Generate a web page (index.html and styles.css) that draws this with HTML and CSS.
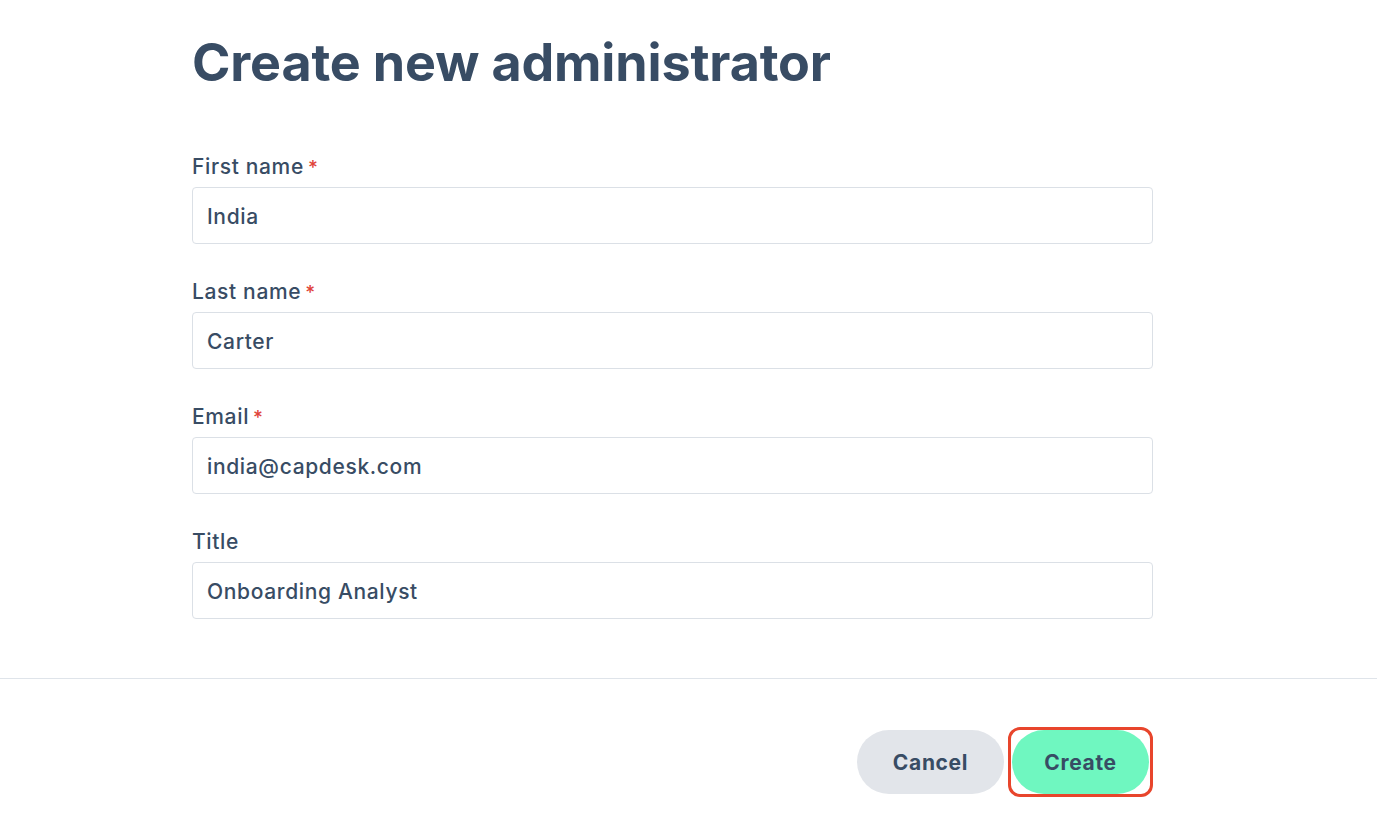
FILE: index.html
```html
<!DOCTYPE html>
<html lang="en">
<head>
    <meta charset="UTF-8">
    <title>Create new administrator</title>
    <link rel="stylesheet" href="styles.css">
</head>
<body>
<div class="container">
    <h1>Create new administrator</h1>

    <form class="admin-form">
        <div class="field">
            <label for="firstName">First name<span class="required">*</span></label>
            <input type="text" id="firstName" value="India">
        </div>
        <div class="field">
            <label for="lastName">Last name<span class="required">*</span></label>
            <input type="text" id="lastName" value="Carter">
        </div>
        <div class="field">
            <label for="email">Email<span class="required">*</span></label>
            <input type="email" id="email" value="india@capdesk.com">
        </div>
        <div class="field">
            <label for="title">Title</label>
            <input type="text" id="title" value="Onboarding Analyst">
        </div>
    </form>
</div>

<div class="footer">
    <div class="actions">
        <button type="button" class="btn btn-cancel">Cancel</button>
        <span class="focus-ring">
            <button type="submit" class="btn btn-create">Create</button>
        </span>
    </div>
</div>
</body>
</html>
```

FILE: styles.css
```css
body {
    margin: 0;
    font-family: Inter, "Noto Sans", sans-serif;
    color: #384c64;
    background: #fff;
}

.container {
    width: 961px;
    margin-left: 192px;
    padding-top: 34px;
}

h1 {
    height: 58px;
    margin: 0 0 63px;
    font-size: 52px;
    line-height: 58px;
    font-weight: 700;
    letter-spacing: -0.15px;
    color: #384c64;
}

.field {
    display: flex;
    flex-direction: column;
    margin-bottom: 36px;
}

.field:last-child {
    margin-bottom: 0;
}

label {
    display: block;
    height: 24px;
    font-size: 21px;
    line-height: 24px;
    font-weight: 500;
    letter-spacing: 0.65px;
    margin-bottom: 8px;
}

.required {
    color: #e0433a;
    margin-left: 4px;
    font-size: 19px;
    line-height: 1;
}

input {
    box-sizing: border-box;
    height: 57px;
    flex: none;
    padding: 2px 14px 0;
    border: 1px solid #dbe0e6;
    border-radius: 4px;
    font-family: inherit;
    font-size: 21px;
    font-weight: 500;
    letter-spacing: 0.65px;
    color: #384c64;
    background: #fff;
    outline: none;
}

.footer {
    margin-top: 59px;
    border-top: 1px solid #dfe4ea;
}

.actions {
    width: 961px;
    margin-left: 192px;
    padding-top: 48px;
    display: flex;
    justify-content: flex-end;
    align-items: center;
    gap: 4px;
}

.btn {
    height: 64px;
    padding-top: 1px;
    border: none;
    border-radius: 32px;
    font-family: inherit;
    font-size: 21px;
    font-weight: 700;
    letter-spacing: 0.65px;
    color: #384c64;
    cursor: pointer;
}

.btn-cancel {
    width: 147px;
    background: #e2e5ea;
}

.focus-ring {
    display: inline-flex;
    border: 3px solid #e8452c;
    border-radius: 12px;
    padding: 0 1px;
}

.btn-create {
    width: 137px;
    background: #6ff7c0;
}
```
